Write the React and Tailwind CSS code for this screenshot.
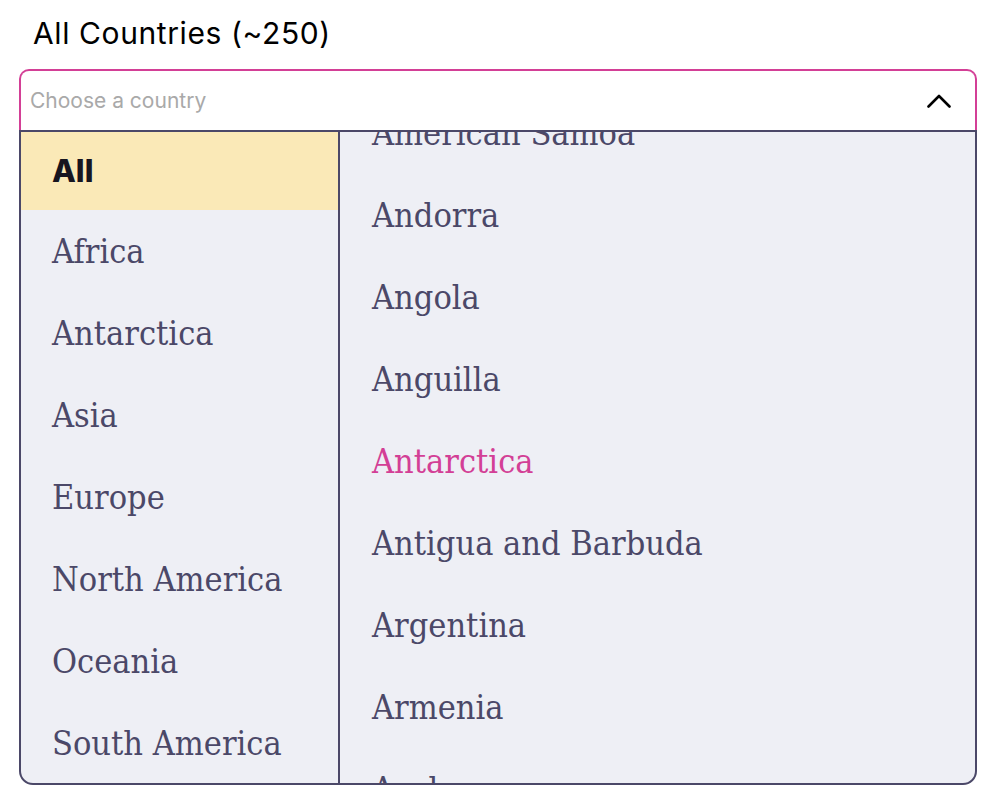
const regions = ["Africa", "Antarctica", "Asia", "Europe", "North America", "Oceania", "South America"];
const countries = [
  "American Samoa",
  "Andorra",
  "Angola",
  "Anguilla",
  "Antarctica",
  "Antigua and Barbuda",
  "Argentina",
  "Armenia",
  "Aruba",
];

const serif = "font-['DejaVu_Serif_Condensed','DejaVu_Serif',serif]";

export default function App() {
  return (
    <div className="w-[990px] h-[806px] bg-white font-['Inter',sans-serif]">
      <div className="pt-[15px] pl-[33px] h-[69px]">
        <div className="text-[30px] leading-[36px] tracking-[0.6px] text-black">All Countries (~250)</div>
      </div>
      <div className="ml-[19px] w-[958px]">
        <div className="h-[61px] border-2 border-b-0 border-[#d33f96] rounded-t-[10px] flex items-center justify-between pl-[9px] pr-[24px] bg-white">
          <span className="text-[21px] text-[#a9a9a9]">Choose a country</span>
          <svg width="24" height="14" viewBox="0 0 24 14" fill="none" className="mt-[1px]">
            <path d="M1.5 12.5 L12 2 L22.5 12.5" stroke="black" strokeWidth="2.6" strokeLinecap="round" strokeLinejoin="round" />
          </svg>
        </div>
        <div className="h-[655px] border-2 border-[#4b4868] rounded-b-[14px] bg-[#eeeff5] flex overflow-hidden">
          <div className="w-[319px] border-r-2 border-[#4b4868] shrink-0">
            <div className="h-[78px] bg-[#fae9b7] flex items-center pl-[31px]">
              <span className="text-[31px] font-extrabold text-[#16151f]">All</span>
            </div>
            {regions.map((r) => (
              <div key={r} className={`h-[82px] flex items-center pl-[31px] pt-[1px] text-[34px] text-[#4b4868] ${serif}`}>
                {r}
              </div>
            ))}
          </div>
          <div className="flex-1 overflow-hidden">
            <div className="-mt-[40px]">
              {countries.map((c) => (
                <div
                  key={c}
                  className={`h-[82px] flex items-center pl-[32px] pt-[1px] text-[34px] ${serif} ${c === "Antarctica" ? "text-[#d33f96]" : "text-[#4b4868]"}`}
                >
                  {c}
                </div>
              ))}
            </div>
          </div>
        </div>
      </div>
    </div>
  );
}
